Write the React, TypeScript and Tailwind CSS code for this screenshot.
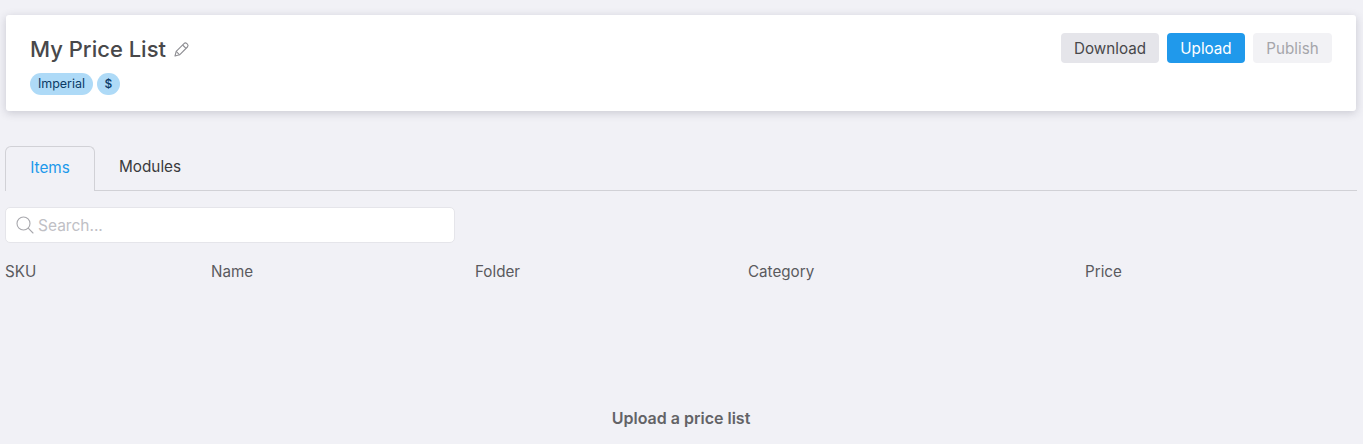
const columns = [
    { label: 'SKU', width: 'w-[206px]' },
    { label: 'Name', width: 'w-[264px]' },
    { label: 'Folder', width: 'w-[273px]' },
    { label: 'Category', width: 'w-[337px]' },
    { label: 'Price', width: 'w-[200px]' },
];

export default function App() {
    return (
        <div className="h-[444px] overflow-hidden bg-[#f1f1f6] pl-[5px] pr-[6px] pt-[15px] font-['Inter',sans-serif] text-[#48484a]">
            <header className="ml-[1px] mr-[1px] flex h-[96px] items-start justify-between rounded-[3px] bg-white px-[24px] pt-[18px] shadow-[0_2px_8px_rgba(60,60,80,0.22)]">
                <div>
                    <div className="flex items-center gap-[8px]">
                        <h1 className="text-[22px] leading-[32px] font-medium">My Price List</h1>
                        <svg className="h-[16px] w-[16px] text-[#8e8e93]" viewBox="0 0 16 16" fill="none" stroke="currentColor" strokeWidth="1.1" strokeLinejoin="round">
                            <path d="M1 15l1.2-4.6 7.8-7.8a2 2 0 0 1 2.8 0l.6.6a2 2 0 0 1 0 2.8l-7.8 7.8z" />
                            <path d="M8.6 4l3.4 3.4M2.2 10.4l3.4 3.4" />
                        </svg>
                    </div>
                    <div className="mt-[8px] flex gap-[4px]">
                        <span className="flex h-[22px] w-[63px] items-center justify-center rounded-full bg-[#aedaf7] text-[12.5px] text-[#0b3b66]">Imperial</span>
                        <span className="flex h-[22px] w-[23px] items-center justify-center rounded-full bg-[#aedaf7] text-[12px] font-medium text-[#0b3b66]">$</span>
                    </div>
                </div>
                <div className="flex gap-[8px]">
                    <button className="h-[30px] w-[98px] rounded-[4px] bg-[#e5e5ea] pt-[2px] text-[15.2px] text-[#48484a]">Download</button>
                    <button className="h-[30px] w-[78px] rounded-[4px] bg-[#2099eb] pt-[2px] text-[15.2px] text-white">Upload</button>
                    <button className="h-[30px] w-[79px] rounded-[4px] bg-[#f2f2f5] pt-[2px] text-[15.2px] text-[#a5a5aa]">Publish</button>
                </div>
            </header>

            <nav className="mt-[35px] flex h-[45px] border-b border-[#d1d1d6]">
                <div className="flex h-[45px] w-[90px] items-center justify-center rounded-t-[6px] border border-b-0 border-[#d1d1d6] bg-[#f1f1f6] pb-[2px] text-[15.3px] text-[#2099eb]">Items</div>
                <div className="flex h-[42px] items-center pl-[24px] text-[15.3px] text-[#3a3a3c]">Modules</div>
            </nav>

            <div className="mt-[16px] flex h-[36px] w-[450px] items-center gap-[4px] rounded-[5px] border border-[#e5e5ea] bg-white pl-[10px]">
                <svg className="h-[18px] w-[18px] text-[#a8a8ad]" viewBox="0 0 18 18" fill="none" stroke="currentColor" strokeWidth="1.1" strokeLinecap="round">
                    <circle cx="7.5" cy="7.5" r="6.5" />
                    <path d="M12.2 12.2l4.8 4.8" />
                </svg>
                <span className="pt-[2px] text-[15.5px] text-[#c0c0c5]">Search...</span>
            </div>

            <div className="mt-[19px] flex text-[15.2px] leading-[20px] text-[#5a5a5e]">
                {columns.map((col) => (
                    <div key={col.label} className={col.width}>{col.label}</div>
                ))}
            </div>

            <p className="mt-[124px] text-center text-[16px] font-semibold text-[#636366]">Upload a price list</p>
        </div>
    );
}
